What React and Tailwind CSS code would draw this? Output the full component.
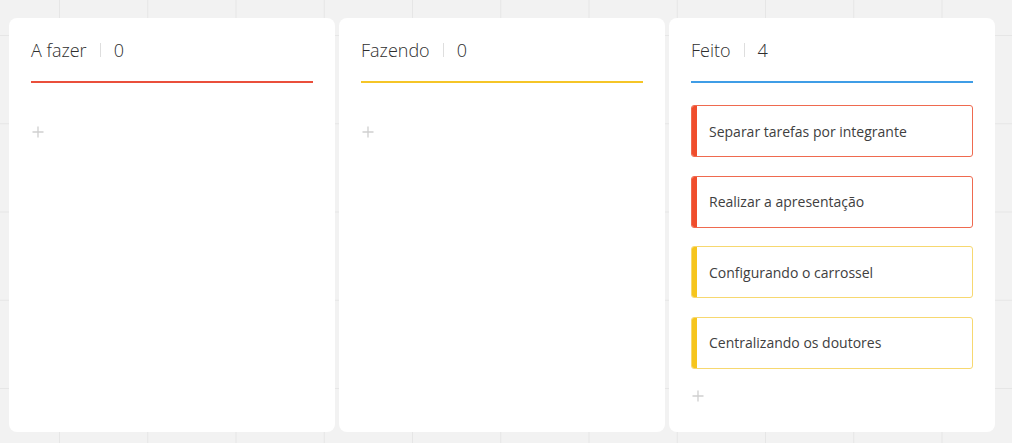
// Quadro kanban simples: três colunas com tarefas
const COLUMNS = [
  { id: 'todo', title: 'A fazer', line: 'bg-[#ea4f3b]', tasks: [] },
  { id: 'doing', title: 'Fazendo', line: 'bg-[#f5c527]', tasks: [] },
  {
    id: 'done',
    title: 'Feito',
    line: 'bg-[#3f9de6]',
    tasks: [
      { text: 'Separar tarefas por integrante', tone: 'red' },
      { text: 'Realizar a apresentação', tone: 'red' },
      { text: 'Configurando o carrossel', tone: 'yellow' },
      { text: 'Centralizando os doutores', tone: 'yellow' }
    ]
  }
]

const TONES = {
  red: { border: 'border-[#ef6a4f]', bar: 'bg-[#f04d2c]' },
  yellow: { border: 'border-[#f7d870]', bar: 'bg-[#f6c51d]' }
}

function PlusIcon() {
  return (
    <svg width="12" height="12" viewBox="0 0 12 12" fill="none">
      <path d="M6 0.5v11M0.5 6h11" stroke="#cfcfcf" strokeWidth="1.3" />
    </svg>
  )
}

function TaskCard({ task }) {
  const tone = TONES[task.tone]
  return (
    <div className={`relative h-[52px] flex items-center rounded-[3px] border ${tone.border} bg-white pl-[17px] overflow-hidden`}>
      <span className={`absolute left-0 top-0 bottom-0 w-[5px] ${tone.bar}`} />
      <span className="text-[14px] text-[#404040]">{task.text}</span>
    </div>
  )
}

function Column({ column }) {
  return (
    <section className="w-[326px] h-[414px] shrink-0 bg-white rounded-[8px] px-[22px] pt-[20px]">
      <header className="h-6 flex items-center text-[18px] font-light text-[#2e2e2e] leading-6">
        <span>{column.title}</span>
        <span className="mx-[13px] w-px h-[14px] bg-[#dedede]" />
        <span>{column.tasks.length}</span>
      </header>
      <div className={`mt-[19px] h-[2px] ${column.line}`} />
      <div className="mt-[22px] flex flex-col gap-[18.5px]">
        {column.tasks.map(task => (
          <TaskCard key={task.text} task={task} />
        ))}
      </div>
      <div className="pt-[21px] pl-[1px] h-3 box-content">
        <PlusIcon />
      </div>
    </section>
  )
}

export default function App() {
  return (
    <div
      className="w-[1012px] h-[443px] overflow-hidden bg-[#f2f2f2] bg-[linear-gradient(to_right,#e6e6e6_1px,transparent_1px),linear-gradient(to_bottom,#e6e6e6_1px,transparent_1px)] bg-[size:88.25px_88.25px] bg-[position:59px_35px] pl-[9px] pt-[18px] flex gap-[4px]"
      style={{ fontFamily: '"Open Sans", "Liberation Sans", sans-serif' }}
    >
      {COLUMNS.map(col => (
        <Column key={col.id} column={col} />
      ))}
    </div>
  )
}
